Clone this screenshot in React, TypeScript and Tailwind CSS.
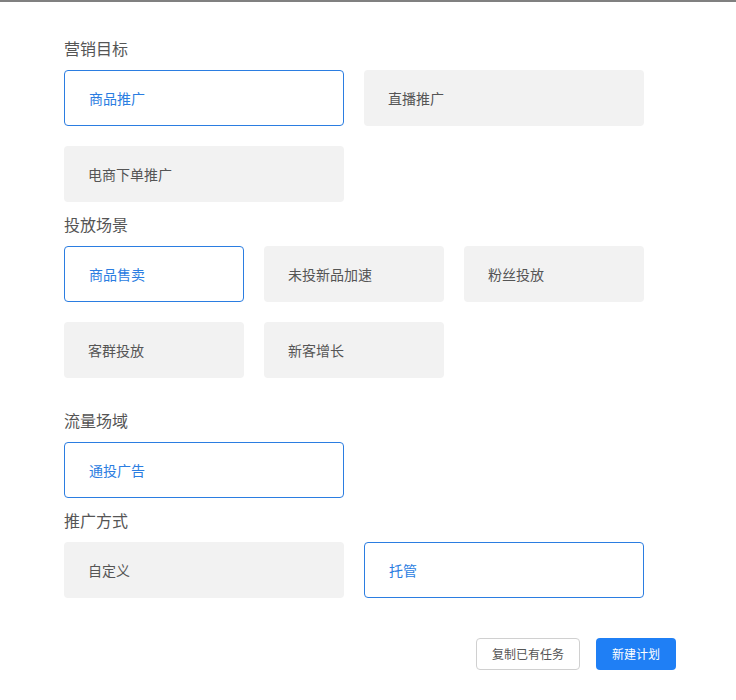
const font = { fontFamily: '"Noto Sans CJK SC", "Liberation Sans", sans-serif' }

type Opt = { label: string; active?: boolean }

function Card({ label, active, wide }: Opt & { wide?: boolean }) {
  return (
    <div
      className={`flex h-14 items-center rounded pb-px pl-6 text-sm ${wide ? 'w-[280px]' : 'w-[180px]'} ${
        active
          ? 'border border-[#2b7de1] bg-white text-[#2b7de1]'
          : 'bg-[#f2f2f2] text-[#555]'
      }`}
    >
      {label}
    </div>
  )
}

function Heading({ children }: { children: string }) {
  return <h3 className="mb-[11px] h-[22px] text-base leading-[22px] text-[#555]">{children}</h3>
}

export default function App() {
  return (
    <div className="min-h-[700px] w-[736px] border-t-2 border-[#808080] bg-white" style={font}>
      <div className="px-16 pt-[35px]">
        {/* 营销目标 */}
        <Heading>营销目标</Heading>
        <div className="grid w-[580px] grid-cols-2 gap-5">
          <Card label="商品推广" active wide />
          <Card label="直播推广" wide />
          <Card label="电商下单推广" wide />
        </div>

        {/* 投放场景 */}
        <div className="mt-[11px]">
          <Heading>投放场景</Heading>
          <div className="grid w-[580px] grid-cols-3 gap-5">
            <Card label="商品售卖" active />
            <Card label="未投新品加速" />
            <Card label="粉丝投放" />
            <Card label="客群投放" />
            <Card label="新客增长" />
          </div>
        </div>

        {/* 流量场域 */}
        <div className="mt-[31px]">
          <Heading>流量场域</Heading>
          <Card label="通投广告" active wide />
        </div>

        {/* 推广方式 */}
        <div className="mt-[11px]">
          <Heading>推广方式</Heading>
          <div className="flex gap-5">
            <Card label="自定义" wide />
            <Card label="托管" active wide />
          </div>
        </div>
      </div>

      <div className="mt-10 flex justify-end gap-4 pr-[60px] pb-8">
        <button className="h-8 w-[104px] rounded-sm border border-[#d0d0d0] bg-white text-xs text-[#555]">
          复制已有任务
        </button>
        <button className="h-8 w-20 rounded-sm bg-[#1f7ff5] text-xs text-white">新建计划</button>
      </div>
    </div>
  )
}
